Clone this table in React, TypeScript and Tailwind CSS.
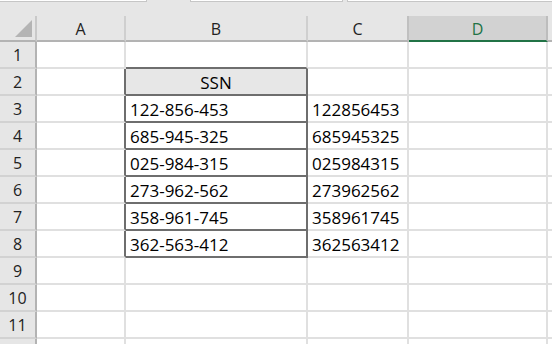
import React from 'react';

const rowNums = [1, 2, 3, 4, 5, 6, 7, 8, 9, 10, 11, 12];

const ssn = ['122-856-453', '685-945-325', '025-984-315', '273-962-562', '358-961-745', '362-563-412'];
const plain = ['122856453', '685945325', '025984315', '273962562', '358961745', '362563412'];

function DataRow({ row }: { row: number }) {
  const inTable = row >= 2 && row <= 8;
  const idx = row - 3;
  const bText = row === 2 ? 'SSN' : idx >= 0 && idx < ssn.length ? ssn[idx] : '';
  const cText = idx >= 0 && idx < plain.length ? plain[idx] : '';

  return (
    <>
      {/* row header - row 12 is cut off by the window, its number sits below the edge */}
      <div className="h-[27px] bg-[#e6e6e6] border-r-2 border-b-2 border-r-[#b3b3b3] border-b-[#d2d2d2] flex items-center justify-center pt-[1px] text-[16px] text-[#222]">
        {row < 12 ? row : ''}
      </div>
      {/* A */}
      <div
        className={`h-[27px] bg-white border-r-2 border-b-2 border-b-[#e0e0e0] ${
          inTable ? 'border-r-[#6e6e6e]' : 'border-r-[#e0e0e0]'
        }`}
      />
      {/* B */}
      <div
        className={`h-[27px] border-r-2 border-b-2 flex items-center pt-[3px] text-[17px] text-black ${
          row === 2 ? 'bg-[#e7e7e7] justify-center' : 'bg-white pl-[4px]'
        } ${inTable ? 'border-r-[#6e6e6e]' : 'border-r-[#e0e0e0]'} ${
          inTable || row === 1 ? 'border-b-[#6e6e6e]' : 'border-b-[#e0e0e0]'
        }`}
      >
        {bText}
      </div>
      {/* C */}
      <div className="h-[27px] bg-white border-r-2 border-b-2 border-[#e0e0e0] flex items-center pt-[3px] pl-[4px] text-[17px] text-black">
        {cText}
      </div>
      {/* D */}
      <div className="h-[27px] bg-white border-r-2 border-b-2 border-[#e0e0e0]" />
      {/* E */}
      <div className="h-[27px] bg-white border-b-2 border-[#e0e0e0]" />
    </>
  );
}

export default function App() {
  return (
    <div className="w-[552px] h-[344px] overflow-hidden bg-[#e6e6e6] font-['Open_Sans',sans-serif]">
      {/* bottom edge of name box / formula bar */}
      <div className="h-4 flex gap-[43px] bg-[#e6e6e6]">
        <div className="w-[147px] h-[2px] bg-white border-b border-r border-[#c6c6c6]" />
        <div className="flex gap-1 flex-1">
          <div className="w-[153px] h-[2px] bg-white border-b border-x border-[#c6c6c6]" />
          <div className="flex-1 h-[2px] bg-white border-b border-l border-[#c6c6c6]" />
        </div>
      </div>

      <div className="grid grid-cols-[37px_89px_182px_101px_139px_1fr]">
        {/* column headers */}
        <div className="h-[26px] bg-[#e6e6e6] border-r-2 border-b-2 border-r-[#c9c9c9] border-b-[#b3b3b3] flex items-end justify-end pr-[3px] pb-[3px]">
          <svg width="17" height="17" viewBox="0 0 17 17">
            <polygon points="0,17 17,17 17,0" fill="#b4b4b4" />
          </svg>
        </div>
        <div className="h-[26px] bg-[#e6e6e6] border-r-2 border-b-2 border-r-[#cfcfcf] border-b-[#b3b3b3] flex items-center justify-center pt-[1px] text-[16px] text-[#222]">
          A
        </div>
        <div className="h-[26px] bg-[#e6e6e6] border-r-2 border-b-2 border-r-[#cfcfcf] border-b-[#b3b3b3] flex items-center justify-center pt-[1px] text-[16px] text-[#222]">
          B
        </div>
        <div className="h-[26px] bg-[#e6e6e6] border-r-2 border-b-2 border-r-[#c0c0c0] border-b-[#b3b3b3] flex items-center justify-center pt-[1px] text-[16px] text-[#222]">
          C
        </div>
        <div className="h-[26px] bg-[#d2d2d2] border-r-2 border-b-2 border-r-[#bdbdbd] border-b-[#217346] flex items-center justify-center pt-[1px] text-[16px] text-[#217346]">
          D
        </div>
        <div className="h-[26px] bg-[#e6e6e6] border-b-2 border-b-[#b3b3b3]" />

        {rowNums.map((r) => (
          <DataRow key={r} row={r} />
        ))}
      </div>
    </div>
  );
}
